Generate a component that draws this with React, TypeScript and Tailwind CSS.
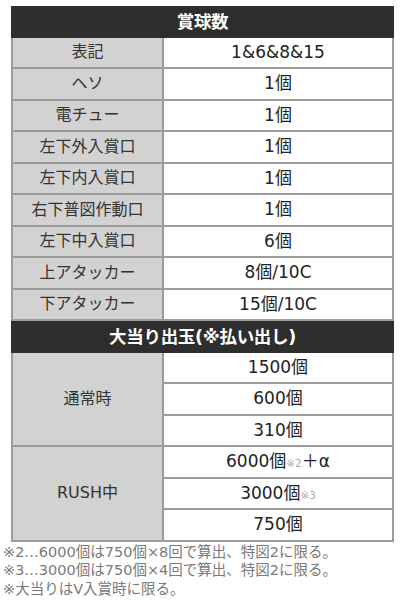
import React from "react";

const font = { fontFamily: '"DejaVu Sans", "Noto Sans CJK JP", sans-serif' };

function Header({ children }: { children: React.ReactNode }) {
  return (
    <div className="h-[31.5px] bg-[#2e2e2e] border-x-2 border-[#2e2e2e] flex items-center justify-center text-white text-[17.5px] font-bold tracking-[-0.3px]">
      {children}
    </div>
  );
}

function Row({ label, value }: { label: string; value: React.ReactNode }) {
  return (
    <div className="h-[31.5px] flex border-x-2 border-b-2 border-[#9c9c9c]">
      <div className="w-[151px] shrink-0 bg-[#d2d2d2] border-r-2 border-[#9c9c9c] flex items-center justify-center text-[#333] text-[16px]">
        {label}
      </div>
      <div className="flex-1 bg-white flex items-center justify-center text-[#222] text-[17px]">
        {value}
      </div>
    </div>
  );
}

function Group({ label, values }: { label: string; values: React.ReactNode[] }) {
  return (
    <div className="flex border-x-2 border-b-2 border-[#9c9c9c]">
      <div className="w-[151px] shrink-0 bg-[#d2d2d2] border-r-2 border-[#9c9c9c] flex items-center justify-center text-[#333] text-[16px]">
        {label}
      </div>
      <div className="flex-1 flex flex-col">
        {values.map((v, i) => (
          <div
            key={i}
            className={
              i < values.length - 1
                ? "h-[31.5px] bg-white border-b-2 border-[#9c9c9c] flex items-center justify-center text-[#222] text-[17px]"
                : "h-[29.5px] bg-white flex items-center justify-center text-[#222] text-[17px]"
            }
          >
            {v}
          </div>
        ))}
      </div>
    </div>
  );
}

export default function App() {
  return (
    <div className="w-[400px] h-[602px] bg-white pt-[6px] overflow-hidden" style={font}>
      <div className="ml-[11px] w-[383px]">
        <Header>賞球数</Header>
        <Row label="表記" value="1&6&8&15" />
        <Row label="ヘソ" value="1個" />
        <Row label="電チュー" value="1個" />
        <Row label="左下外入賞口" value="1個" />
        <Row label="左下内入賞口" value="1個" />
        <Row label="右下普図作動口" value="1個" />
        <Row label="左下中入賞口" value="6個" />
        <Row label="上アタッカー" value="8個/10C" />
        <Row label="下アタッカー" value="15個/10C" />
        <Header>大当り出玉(※払い出し)</Header>
        <Group label="通常時" values={["1500個", "600個", "310個"]} />
        <Group
          label="RUSH中"
          values={[
            <span key="a">
              6000個<span className="text-[10.5px] text-[#aaa]">※2</span>＋α
            </span>,
            <span key="b">
              3000個<span className="text-[10.5px] text-[#aaa]">※3</span>
            </span>,
            "750個",
          ]}
        />
      </div>
      <div className="pl-[3px] pt-[1px] text-[14.5px] leading-[18.5px] text-[#7a7a7a]">
        <div>※2…6000個は750個×8回で算出、特図2に限る。</div>
        <div>※3…3000個は750個×4回で算出、特図2に限る。</div>
        <div>※大当りはV入賞時に限る。</div>
      </div>
    </div>
  );
}
